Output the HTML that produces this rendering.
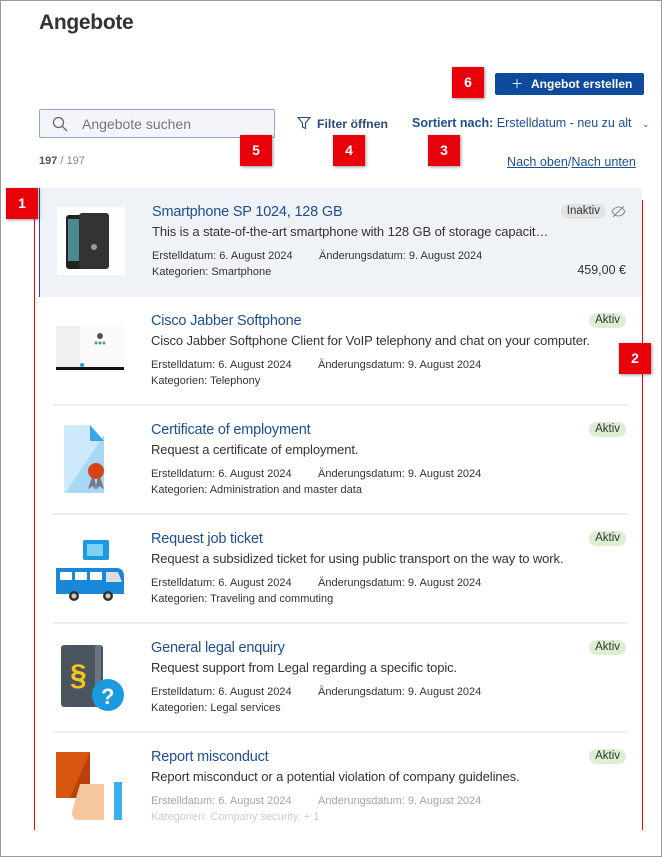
<!DOCTYPE html>
<html><head><meta charset="utf-8"><style>
*{box-sizing:border-box;margin:0;padding:0}
body{width:662px;height:857px;overflow:hidden;background:#fff;font-family:"Liberation Sans",sans-serif;color:#333;position:relative}
.frame{position:absolute;left:0;top:0;width:662px;height:857px;border:1px solid #9a9a9a}
h1{position:absolute;left:39px;top:11px;font-size:21px;font-weight:bold;color:#333;letter-spacing:-0.3px}
.btn{position:absolute;left:495px;top:73px;width:149px;height:22px;background:#0d4a9c;color:#fff;border-radius:2px;font-size:12px;font-weight:bold;line-height:22px;padding-left:16px}
.btn span{font-weight:normal;margin-right:8px}
.search{position:absolute;left:39px;top:109px;width:236px;height:29px;border:1px solid #8fa6c6;border-radius:2px;background:#f3f5f9;font-size:14px;color:#777;padding:6px 0 0 42px}
.search svg{position:absolute;left:12px;top:6px}
.filter{position:absolute;left:297px;top:116px;font-size:12.3px;font-weight:bold;color:#2b4a7a}
.filter svg{vertical-align:-2px;margin-right:6px}
.sort{position:absolute;left:412px;top:116px;font-size:12.5px;color:#1d4f91;white-space:nowrap}
.sort b{font-weight:bold}
.count{position:absolute;left:39px;top:155px;font-size:11px;color:#888}
.count b{color:#555}
.nav{position:absolute;left:507px;top:155px;font-size:12.6px;color:#1d4f91;white-space:nowrap}
.nav u{text-decoration:underline}
.redv{position:absolute;width:1px;background:#f00}
.mark{position:absolute;width:32px;height:31px;background:#e8000a;color:#fff;font-weight:bold;font-size:14px;text-align:center;line-height:31px;box-shadow:1px 1px 3px rgba(0,0,0,.4)}
.item{position:absolute;left:39px;width:603px;height:109px}
.item.first{background:#eff3f8;border-left:1px solid #1d4f91}
.sep{position:absolute;left:53px;width:575px;height:2px;background:#eee}
.img{position:absolute;left:17px;top:19px;width:68px;height:68px}
.t{position:absolute;left:112px;top:16px;font-size:14.5px;color:#1d4f91;letter-spacing:-0.2px}
.d{position:absolute;left:112px;top:36px;font-size:13px;color:#333;white-space:nowrap;letter-spacing:-0.1px}
.m{position:absolute;left:112px;top:62px;font-size:11px;color:#333;white-space:nowrap}
.m2{position:absolute;left:279px;top:62px;font-size:11px;color:#333;white-space:nowrap}
.k{position:absolute;left:112px;top:78px;font-size:11px;color:#333;white-space:nowrap}
.badge{position:absolute;right:16px;top:16px;height:15px;border-radius:8px;background:#dcefd2;font-size:11.5px;line-height:15px;padding:0 6px;color:#333}
.badge.in{background:#e2e2e2;right:36px}
.price{position:absolute;right:16px;top:75px;font-size:12.5px;color:#333}
.fade{opacity:.45}
</style></head><body>
<h1>Angebote</h1>
<div class="btn"><span>＋</span>Angebot erstellen</div>
<div class="search"><svg width="16" height="16" viewBox="0 0 16 16"><circle cx="6.5" cy="6.5" r="5" fill="none" stroke="#666" stroke-width="1.3"/><path d="M10.2 10.2L15 15" stroke="#666" stroke-width="1.3"/></svg>Angebote suchen</div>
<div class="filter"><svg width="14" height="14" viewBox="0 0 14 14"><path d="M1 1.5h12L8.5 7v5.5l-3-1.5V7z" fill="none" stroke="#2b4a7a" stroke-width="1.1"/></svg>Filter öffnen</div>
<div class="sort"><b>Sortiert nach:</b> Erstelldatum - neu zu alt &nbsp; <span style="font-size:9px">⌄</span></div>
<div class="count"><b>197</b> / 197</div>
<div class="nav"><u>Nach oben</u>/<u>Nach unten</u></div>

<div class="item first" style="top:188px">
<svg class="img" viewBox="0 0 68 68"><rect width="68" height="68" fill="#fff"/><rect x="9" y="8" width="22" height="54" rx="3" fill="#222"/><rect x="11" y="12" width="18" height="42" fill="#4a8a90"/><rect x="22" y="6" width="30" height="56" rx="3" fill="#333"/><circle cx="37" cy="40" r="3" fill="#999"/></svg>
<div class="t">Smartphone SP 1024, 128 GB</div>
<div class="d">This is a state-of-the-art smartphone with 128 GB of storage capacit…</div>
<div class="m">Erstelldatum: 6. August 2024</div><div class="m2">Änderungsdatum: 9. August 2024</div>
<div class="k">Kategorien: Smartphone</div>
<div class="badge in">Inaktiv</div>
<svg style="position:absolute;right:16px;top:17px" width="15" height="13" viewBox="0 0 15 13"><path d="M1 6.5C3 3 5 2 7.5 2S12 3 14 6.5C12 10 10 11 7.5 11S3 10 1 6.5z" fill="none" stroke="#888" stroke-width="1.1"/><path d="M2 12L13 1" stroke="#888" stroke-width="1.1"/></svg>
<div class="price">459,00 €</div>
</div>

<div class="item" style="top:297px">
<svg class="img" viewBox="0 0 68 68"><rect x="0" y="10" width="68" height="42" fill="#fafafa"/><rect x="0" y="10" width="24" height="42" fill="#f0f0f0"/><circle cx="44" cy="20" r="3" fill="#555"/><circle cx="40" cy="27" r="1.5" fill="#1aa0e0"/><circle cx="44" cy="27" r="1.5" fill="#4a4"/><circle cx="48" cy="27" r="1.5" fill="#888"/><rect x="0" y="51" width="68" height="3" fill="#111"/><circle cx="26" cy="49" r="2" fill="#1aa0e0"/></svg>
<div class="t">Cisco Jabber Softphone</div>
<div class="d">Cisco Jabber Softphone Client for VoIP telephony and chat on your computer.</div>
<div class="m">Erstelldatum: 6. August 2024</div><div class="m2">Änderungsdatum: 9. August 2024</div>
<div class="k">Kategorien: Telephony</div>
<div class="badge">Aktiv</div>
</div>
<div class="sep" style="top:404px"></div>

<div class="item" style="top:406px">
<svg class="img" viewBox="0 0 68 68"><path d="M8 0h26l14 16v54H8z" fill="#cde9fb"/><path d="M8 70L48 10v60z" fill="#a8d8f5"/><path d="M34 0l14 16H34z" fill="#3aa6ea"/><path d="M36 52l-4 12 5-3 2 4 3-13zM44 52l4 12-5-3-2 4-3-13z" fill="#778"/><circle cx="40" cy="46" r="8" fill="#d84315"/></svg>
<div class="t">Certificate of employment</div>
<div class="d">Request a certificate of employment.</div>
<div class="m">Erstelldatum: 6. August 2024</div><div class="m2">Änderungsdatum: 9. August 2024</div>
<div class="k">Kategorien: Administration and master data</div>
<div class="badge">Aktiv</div>
</div>
<div class="sep" style="top:513px"></div>

<div class="item" style="top:515px">
<svg class="img" viewBox="0 0 68 68"><rect x="27" y="6" width="26" height="20" rx="2" fill="#1a9be0"/><rect x="31" y="10" width="16" height="12" fill="#7fd0f5"/><path d="M0 34h60q8 0 8 8v18H0z" fill="#1a88d8"/><rect x="4" y="38" width="12" height="8" fill="#fff"/><rect x="19" y="38" width="12" height="8" fill="#fff"/><rect x="34" y="38" width="12" height="8" fill="#fff"/><path d="M50 38h12l4 10H50z" fill="#ddd"/><circle cx="18" cy="62" r="5" fill="#333"/><circle cx="18" cy="62" r="2.5" fill="#ccc"/><circle cx="52" cy="62" r="5" fill="#333"/><circle cx="52" cy="62" r="2.5" fill="#ccc"/></svg>
<div class="t">Request job ticket</div>
<div class="d">Request a subsidized ticket for using public transport on the way to work.</div>
<div class="m">Erstelldatum: 6. August 2024</div><div class="m2">Änderungsdatum: 9. August 2024</div>
<div class="k">Kategorien: Traveling and commuting</div>
<div class="badge">Aktiv</div>
</div>
<div class="sep" style="top:622px"></div>

<div class="item" style="top:624px">
<svg class="img" viewBox="0 0 68 68"><rect x="5" y="2" width="42" height="62" rx="3" fill="#4a5560"/><rect x="39" y="2" width="6" height="62" fill="#6a7580"/><text x="14" y="42" font-size="30" font-weight="bold" fill="#f5c518" font-family="Liberation Sans,sans-serif">§</text><circle cx="52" cy="52" r="16" fill="#1a9be0"/><text x="45" y="61" font-size="22" font-weight="bold" fill="#fff" font-family="Liberation Sans,sans-serif">?</text></svg>
<div class="t">General legal enquiry</div>
<div class="d">Request support from Legal regarding a specific topic.</div>
<div class="m">Erstelldatum: 6. August 2024</div><div class="m2">Änderungsdatum: 9. August 2024</div>
<div class="k">Kategorien: Legal services</div>
<div class="badge">Aktiv</div>
</div>
<div class="sep" style="top:731px"></div>

<div class="item" style="top:733px">
<svg class="img" viewBox="0 0 68 68"><rect x="0" y="0" width="34" height="46" fill="#d9560f"/><path d="M34 0v46H14z" fill="#b8400a"/><path d="M24 32h24v36H22q-6 0-6-8z" fill="#f6c79e"/><rect x="58" y="30" width="8" height="38" fill="#3ab0ee"/></svg>
<div class="t">Report misconduct</div>
<div class="d">Report misconduct or a potential violation of company guidelines.</div>
<div class="m fade">Erstelldatum: 6. August 2024</div><div class="m2 fade">Änderungsdatum: 9. August 2024</div>
<div class="k" style="opacity:.25">Kategorien: Company security, + 1</div>
<div class="badge">Aktiv</div>
</div>

<div class="redv" style="left:34px;top:200px;height:630px"></div>
<div class="redv" style="left:642px;top:200px;height:630px"></div>
<div class="mark" style="left:6px;top:188px">1</div>
<div class="mark" style="left:619px;top:343px">2</div>
<div class="mark" style="left:428px;top:135px">3</div>
<div class="mark" style="left:333px;top:135px">4</div>
<div class="mark" style="left:240px;top:135px">5</div>
<div class="mark" style="left:452px;top:67px">6</div>
<div class="frame"></div>
</body></html>
